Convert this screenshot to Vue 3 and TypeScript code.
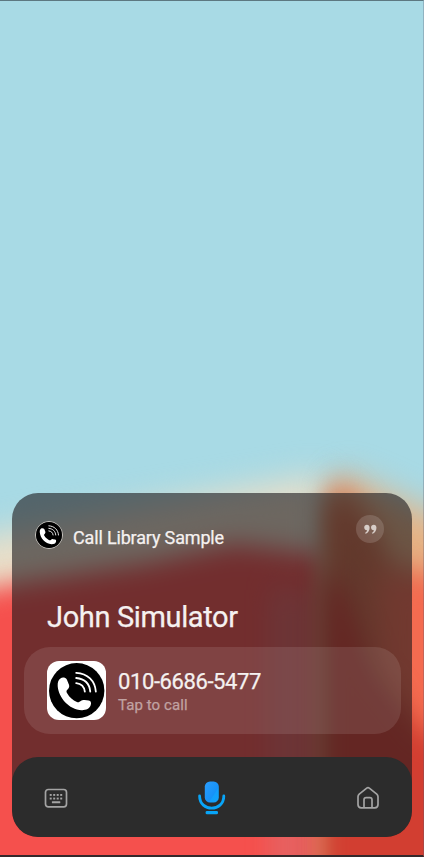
<script setup lang="ts">
interface Contact {
  name: string
  phone: string
  hint: string
}

const appName: string = 'Call Library Sample'
const contact: Contact = {
  name: 'John Simulator',
  phone: '010-6686-5477',
  hint: 'Tap to call',
}
const keyColumns: number[] = [6.5, 10, 13.5, 17]
</script>

<template>
  <main class="screen">
    <svg class="wallpaper" viewBox="0 0 424 857" aria-hidden="true">
      <defs>
        <filter id="soft" x="-30%" y="-30%" width="160%" height="160%" color-interpolation-filters="sRGB"><feGaussianBlur stdDeviation="16" /></filter>
        <filter id="mid" x="-30%" y="-30%" width="160%" height="160%" color-interpolation-filters="sRGB"><feGaussianBlur stdDeviation="13" /></filter>
        <filter id="edge" x="-30%" y="-30%" width="160%" height="160%" color-interpolation-filters="sRGB"><feGaussianBlur stdDeviation="11 17" /></filter>
        <filter id="column" x="-60%" y="-20%" width="220%" height="140%" color-interpolation-filters="sRGB"><feGaussianBlur stdDeviation="10 14" /></filter>
      </defs>
      <rect width="424" height="857" fill="#a8dae5" />
      <path d="M-60 546 L0 533 L150 505 L325 475 L325 920 H-60Z" fill="#e9dec8" filter="url(#soft)" />
      <path d="M-60 602 L0 586 L150 563 L235 544 L330 556 L330 940 H-60Z" fill="#f5504d" filter="url(#mid)" />
      <rect x="268" y="590" width="50" height="340" fill="#e7605f" filter="url(#column)" />
      <path d="M322 496 L335 482 L354 480 L385 492 L424 510 L490 530 V940 H322Z" fill="#e6b284" filter="url(#edge)" />
      <path d="M324 502 L336 490 L354 498 L380 535 L396 575 L490 640 V940 H324Z" fill="#ce6c48" filter="url(#edge)" />
      <path d="M378 570 L490 580 V770 H420 L376 670Z" fill="#f46b50" filter="url(#soft)" />
      <path d="M323 566 L345 590 L374 670 L424 734 L490 755 V940 H323Z" fill="#d23e31" filter="url(#mid)" />
    </svg>

    <section class="panel">
      <div class="content">
        <header class="header">
          <span class="mini-logo">
            <svg viewBox="3 4 52 52">
              <circle cx="29" cy="30" r="29" fill="#000" />
              <use href="#handset" />
            </svg>
          </span>
          <span class="app-name">{{ appName }}</span>
          <span class="quote">
            <svg viewBox="0 0 12 10">
              <path id="mark" d="M2.7 .6C4.2 .6 5.2 1.7 5.2 3.4 5.2 6 3.7 8.3 1.5 9L.9 8.1C2 7.5 2.7 6.7 2.9 5.6 1.4 5.8 .2 4.7 .2 3.1 .2 1.6 1.3 .6 2.7 .6Z" />
              <use href="#mark" x="6.3" />
            </svg>
          </span>
        </header>

        <h1 class="name">{{ contact.name }}</h1>

        <div class="call-card">
          <svg class="logo" viewBox="0 0 58 58">
            <circle cx="29.2" cy="29.2" r="27.2" fill="#000" />
            <g id="handset">
              <path d="M13.2 17.2C15 15.8 18 16 19.5 18.2L21.7 23.5C22.3 25.5 21.2 27 19.7 28.4 18.8 29.4 19.2 30.6 19.8 31.7 22.2 35.8 25.4 38.6 29.4 40.4 31 41 32 40.3 33.1 39.4 34.2 38.4 35.4 38.1 37 38.3L41 38.8C43.2 39.1 43.7 41 43 43.3 42 47 38.2 48.4 34.2 48.3 21.4 47.8 11.3 35.8 10.5 24.5 10.4 21.2 11 18.8 13.2 17.2Z" fill="#fff" />
              <g fill="none" stroke="#fff" stroke-width="1.8" stroke-linecap="round">
                <path d="M28.7 11.6C40 12.3 47.2 19.5 48 30" />
                <path d="M28.7 16.7C37 17.5 41.8 22.4 42.5 30" />
                <path d="M28.7 21.8C33.8 22.5 36.6 25.4 37.2 30" />
              </g>
            </g>
          </svg>
          <div class="details">
            <span class="phone">{{ contact.phone }}</span>
            <span class="hint">{{ contact.hint }}</span>
          </div>
        </div>
      </div>

      <nav class="toolbar">
        <svg class="keyboard" viewBox="0 0 24 20">
          <rect x="1.5" y="1.5" width="21" height="17.4" rx="2.8" fill="none" stroke="#a4a4a4" stroke-width="1.7" />
          <g fill="#a4a4a4">
            <template v-for="x in keyColumns" :key="x">
              <rect :x="x - 0.8" y="6" width="2" height="1.9" />
              <rect :x="x - 0.8" y="9.6" width="2" height="1.9" />
            </template>
            <rect x="7.9" y="13.3" width="8.4" height="1.9" rx=".5" />
          </g>
        </svg>
        <svg class="mic" viewBox="0 0 28 34">
          <defs>
            <linearGradient id="blue" x1="0" y1="0" x2="1" y2="1">
              <stop offset="0" stop-color="#2b9dfc" />
              <stop offset=".62" stop-color="#1692f8" />
              <stop offset=".66" stop-color="#129ffb" />
              <stop offset="1" stop-color="#10a4fc" />
            </linearGradient>
          </defs>
          <rect x="6.8" y=".4" width="14" height="21.2" rx="5.2" fill="url(#blue)" />
          <path d="M1.6 15C1.6 31.2 25.8 31.2 25.8 15" fill="none" stroke="#08a5f8" stroke-width="2.8" stroke-linecap="round" />
          <rect x="7.6" y="29.9" width="12.4" height="3.4" rx="1.4" fill="#08a5f8" />
        </svg>
        <svg class="home" viewBox="0 0 24 24" fill="none" stroke="#a4a4a4" stroke-width="1.7" stroke-linejoin="round">
          <path d="M2 10.8C2 9.6 2.4 8.9 3.2 8.2L10.7 2.2C11.6 1.5 12.4 1.5 13.3 2.2L20.8 8.2C21.6 8.9 22 9.6 22 10.8V18.6C22 20.7 20.9 21.9 18.8 21.9H5.2C3.1 21.9 2 20.7 2 18.6Z" />
          <path d="M8 21.8V13.8C8 12.4 8.8 11.6 10.2 11.6H13.8C15.2 11.6 16 12.4 16 13.8V21.8" />
        </svg>
      </nav>
    </section>
  </main>
</template>

<style>
body {
  margin: 0;
  overflow: hidden;
}
</style>

<style scoped>
.screen {
  position: relative;
  box-sizing: border-box;
  width: 424px;
  height: 857px;
  padding: 0 12px 20px;
  display: flex;
  flex-direction: column;
  justify-content: flex-end;
  overflow: hidden;
  font-family: Roboto, "Liberation Sans", sans-serif;
  color: #f5f1f0;
}
.screen::after {
  content: "";
  position: absolute;
  inset: 0;
  border-top: 1px solid #5d7881;
  border-right: 1px solid rgba(90, 90, 110, 0.3);
  border-bottom: 2px solid #35282b;
}
.wallpaper {
  position: absolute;
  inset: 0;
  width: 424px;
  height: 857px;
}
.panel {
  position: relative;
  height: 344px;
  border-radius: 26px;
  background: rgba(27, 24, 26, 0.6);
  overflow: hidden;
  display: flex;
  flex-direction: column;
}
.content {
  flex: 1;
  padding: 22px 11px 0 12px;
}
.header {
  display: flex;
  align-items: flex-start;
  height: 70px;
  padding: 0 17px 0 11px;
}
.mini-logo {
  box-sizing: border-box;
  width: 28px;
  height: 28px;
  margin-top: 6px;
  border: 1px solid #c7c4bf;
  border-radius: 50%;
  overflow: hidden;
}
.mini-logo svg {
  display: block;
  width: 26px;
  height: 26px;
}
.app-name {
  margin: 12px 0 0 10px;
  font-size: 18px;
  line-height: 22px;
  letter-spacing: -0.16px;
  -webkit-text-stroke: 0.25px currentColor;
}
.quote {
  width: 28px;
  height: 28px;
  margin-left: auto;
  border-radius: 50%;
  background: rgba(255, 255, 255, 0.15);
  display: flex;
  align-items: center;
  justify-content: center;
}
.quote svg {
  width: 13px;
  height: 11px;
  fill: #d7cdc8;
}
.name {
  margin: 14px 0 0 23px;
  font-size: 29px;
  line-height: 36px;
  font-weight: 400;
  letter-spacing: -0.36px;
  -webkit-text-stroke: 0.25px currentColor;
}
.call-card {
  box-sizing: border-box;
  height: 87px;
  margin-top: 12px;
  padding: 0 23px;
  border-radius: 26px;
  background: rgba(255, 255, 255, 0.1);
  display: flex;
  align-items: center;
}
.logo {
  width: 59px;
  height: 59px;
  border-radius: 12px;
  background: #fff;
}
.details {
  margin: 1px 0 0 12px;
  display: flex;
  flex-direction: column;
}
.phone {
  font-size: 22px;
  line-height: 27px;
  letter-spacing: -0.4px;
  -webkit-text-stroke: 0.25px currentColor;
}
.hint {
  font-size: 15px;
  line-height: 20px;
  letter-spacing: 0.08px;
  color: #c0a2a2;
  -webkit-text-stroke: 0.25px currentColor;
}
.toolbar {
  box-sizing: border-box;
  height: 80px;
  padding: 2px 32px 0;
  border-radius: 26px;
  background: #2c2c2c;
  display: flex;
  align-items: center;
  justify-content: space-between;
}
.keyboard {
  width: 24px;
  height: 20px;
}
.mic {
  width: 28px;
  height: 34px;
}
.home {
  width: 24px;
  height: 24px;
}
</style>
